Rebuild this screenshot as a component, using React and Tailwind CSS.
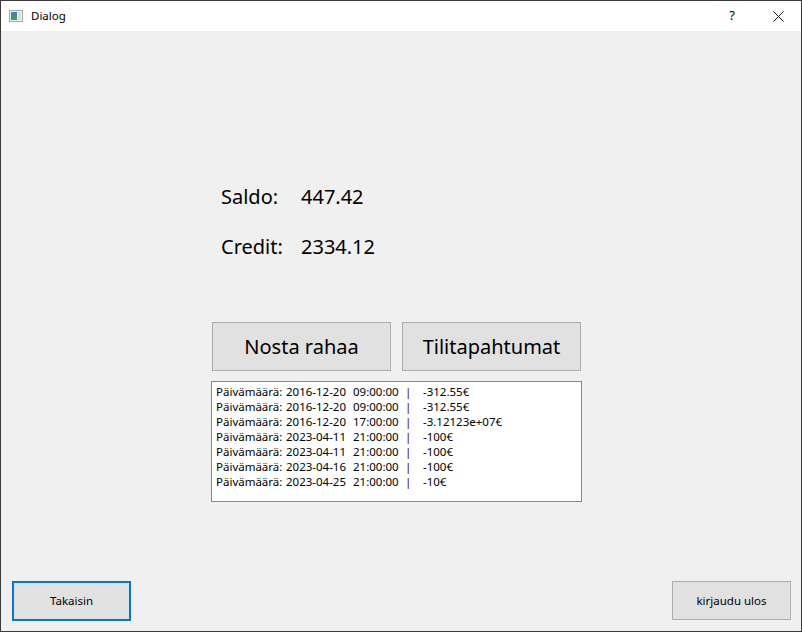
import React from "react";

const rows = [
  ["2016-12-20", "09:00:00", "-312.55€"],
  ["2016-12-20", "09:00:00", "-312.55€"],
  ["2016-12-20", "17:00:00", "-3.12123e+07€"],
  ["2023-04-11", "21:00:00", "-100€"],
  ["2023-04-11", "21:00:00", "-100€"],
  ["2023-04-16", "21:00:00", "-100€"],
  ["2023-04-25", "21:00:00", "-10€"],
];

const font = { fontFamily: '"Noto Sans", "Open Sans", sans-serif' };

const WindowIcon = () => (
  <svg width="14" height="12" viewBox="0 0 14 12">
    <defs>
      <linearGradient id="g" x1="0" y1="0" x2="0" y2="1">
        <stop offset="0" stopColor="#3f7fc0" />
        <stop offset="1" stopColor="#3aa070" />
      </linearGradient>
    </defs>
    <rect x="0.5" y="0.5" width="13" height="11" fill="#f4f4f4" stroke="#a8a8a8" />
    <rect x="2" y="2" width="6" height="8" fill="url(#g)" />
    <rect x="9" y="2" width="3" height="8" fill="#dcdcdc" />
  </svg>
);

const App = () => {
  return (
    <div
      className="w-[802px] h-[632px] border border-[#3a3a3a] bg-[#f0f0f0] flex flex-col text-black"
      style={font}
    >
      {/* title bar */}
      <div className="h-[30px] bg-white flex items-center pl-[8px]">
        <WindowIcon />
        <span className="ml-[8px] text-[11.5px]">Dialog</span>
        <div className="ml-auto flex items-center">
          <span className="w-[46px] text-center text-[13px]">?</span>
          <span className="w-[46px] flex justify-center">
            <svg width="11" height="11" viewBox="0 0 11 11">
              <path d="M0.5 0.5 L10.5 10.5 M10.5 0.5 L0.5 10.5" stroke="#111" strokeWidth="1" />
            </svg>
          </span>
        </div>
      </div>

      {/* body */}
      <div className="flex-1 flex flex-col pt-[152px] pb-[10px] pl-[11px] pr-[10px]">
        <div className="pl-[209px] flex flex-col gap-[22px] text-[20px] leading-[28px]">
          <div className="flex">
            <span className="w-[80px]">Saldo:</span>
            <span>447.42</span>
          </div>
          <div className="flex">
            <span className="w-[80px]">Credit:</span>
            <span>2334.12</span>
          </div>
        </div>

        <div className="ml-[199px] mt-[61px] w-[371px] flex flex-col">
          <div className="flex gap-[11px] pl-[1px]">
            <button className="w-[179px] h-[49px] bg-[#e1e1e1] border border-[#adadad] text-[20px]">
              Nosta rahaa
            </button>
            <button className="w-[179px] h-[49px] bg-[#e1e1e1] border border-[#adadad] text-[20px]">
              Tilitapahtumat
            </button>
          </div>
          <div className="mt-[10px] w-[371px] h-[121px] bg-white border border-[#828790] pl-[4px] pt-[2px]">
            {rows.map((r, i) => (
              <div key={i} className="flex text-[11.5px] leading-[15px] whitespace-nowrap">
                <span className="w-[70px]">Päivämäärä:</span>
                <span className="w-[67px]">{r[0]}</span>
                <span className="w-[52px]">{r[1]}</span>
                <span className="w-[18px] text-[#3e0848]">|</span>
                <span>{r[2]}</span>
              </div>
            ))}
          </div>
        </div>

        <div className="mt-auto flex justify-between">
          <button className="w-[119px] h-[40px] bg-[#e1e1e1] border-2 border-[#0078d7] text-[11.5px]">
            Takaisin
          </button>
          <button className="w-[119px] h-[39px] bg-[#e1e1e1] border border-[#adadad] text-[11.5px]">
            kirjaudu ulos
          </button>
        </div>
      </div>
    </div>
  );
};

export default App;
